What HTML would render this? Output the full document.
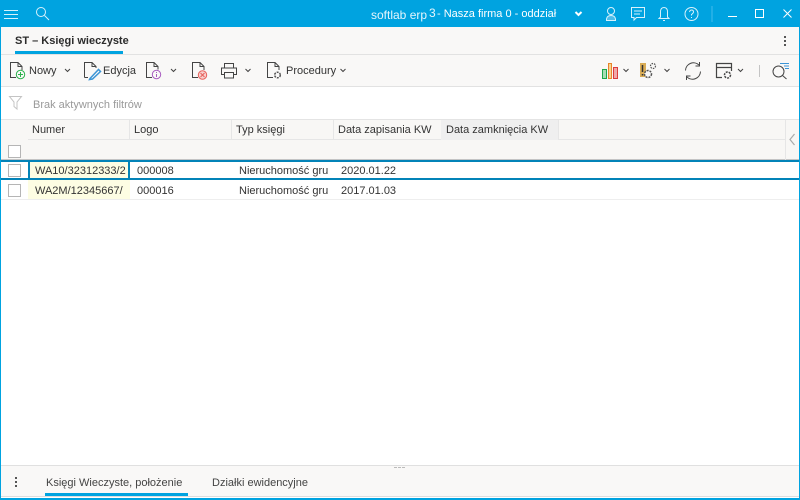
<!DOCTYPE html>
<html><head><meta charset="utf-8"><style>
html,body{margin:0;padding:0;background:#fff}
#p{position:relative;width:800px;height:500px;overflow:hidden;background:#fff;font-family:"Liberation Sans",sans-serif;font-size:11px;color:#333}
#p div,#p span.t{position:absolute;white-space:nowrap}
svg{position:absolute;overflow:visible;fill:none}
.t{line-height:14px}
</style></head><body><div id="p">
<div style="left:0;top:27px;width:800px;height:27px;background:#f9f8f7"></div>
<div style="left:0;top:54px;width:800px;height:1px;background:#e2e2e2"></div>
<div style="left:0;top:55px;width:800px;height:31px;background:#f9f8f7"></div>
<div style="left:0;top:86px;width:800px;height:1px;background:#e2e2e2"></div>
<div style="left:0;top:119px;width:800px;height:1px;background:#e4e4e4"></div>
<div style="left:0;top:120px;width:800px;height:39px;background:#f8f7f5"></div>
<div style="left:0;top:159px;width:800px;height:1px;background:#c4c4c4"></div>
<div style="left:28px;top:139px;width:758px;height:1px;background:#e6e6e6"></div>
<div style="left:129px;top:120px;width:1px;height:20px;background:#e6e6e6"></div>
<div style="left:231px;top:120px;width:1px;height:20px;background:#e6e6e6"></div>
<div style="left:333px;top:120px;width:1px;height:20px;background:#e6e6e6"></div>
<div style="left:441px;top:120px;width:118px;height:20px;background:#efefef"></div>
<div style="left:558px;top:120px;width:1px;height:20px;background:#e6e6e6"></div>
<div style="left:785px;top:120px;width:1px;height:40px;background:#e6e6e6"></div>
<div style="left:28px;top:162px;width:102px;height:16px;background:#fdfde3"></div>
<div style="left:28px;top:180px;width:102px;height:19px;background:#fdfde3"></div>
<div style="left:0;top:199px;width:800px;height:1px;background:#eeeeee"></div>
<div style="left:0;top:160px;width:800px;height:2px;background:#0383b8"></div>
<div style="left:0;top:178px;width:800px;height:2px;background:#0383b8"></div>
<div style="left:28px;top:160px;width:2px;height:20px;background:#0383b8"></div>
<div style="left:128px;top:160px;width:2px;height:20px;background:#0383b8"></div>
<div style="left:8px;top:145px;width:11px;height:11px;border:1px solid #b5b5b5;background:#fff"></div>
<div style="left:8px;top:164px;width:11px;height:11px;border:1px solid #b5b5b5;background:#fff"></div>
<div style="left:8px;top:184px;width:11px;height:11px;border:1px solid #b5b5b5;background:#fff"></div>
<div style="left:0;top:465px;width:800px;height:1px;background:#e0e0e0"></div>
<div style="left:0;top:466px;width:800px;height:31px;background:#f9f8f7"></div>
<div style="left:0;top:496px;width:800px;height:1px;background:#dddddd"></div>
<div style="left:45px;top:493px;width:143px;height:3px;background:#00a3e0"></div>
<div style="left:15px;top:51px;width:108px;height:3px;background:#00a3e0"></div>
<div style="left:394px;top:467px;width:3px;height:1px;background:#bbb"></div>
<div style="left:398px;top:467px;width:3px;height:1px;background:#bbb"></div>
<div style="left:402px;top:467px;width:3px;height:1px;background:#bbb"></div>
<div style="left:0;top:0;width:800px;height:27px;background:#00a3e0"></div>
<div style="left:0;top:0;width:1px;height:500px;background:#00a3e0"></div>
<div style="right:0;top:0;width:1px;height:500px;background:#00a3e0"></div>
<div style="left:0;bottom:0;width:800px;height:2px;background:#00a3e0"></div>

<span class="t" style="left:371px;top:8px;font-size:12px;color:#e4f5fc">softlab erp</span>
<span class="t" style="left:429px;top:6px;font-size:12px;color:#e4f5fc">3</span>
<span class="t" style="left:437px;top:7px;color:#fff">- Nasza firma 0 - oddział</span>
<span class="t" style="left:15px;top:34px;font-weight:bold;color:#2c2c2c">ST – Księgi wieczyste</span>
<span class="t" style="left:29px;top:64px">Nowy</span>
<span class="t" style="left:103px;top:64px">Edycja</span>
<span class="t" style="left:286px;top:64px">Procedury</span>
<span class="t" style="left:33px;top:98px;color:#999">Brak aktywnych filtrów</span>
<span class="t" style="left:32px;top:123px">Numer</span>
<span class="t" style="left:134px;top:123px">Logo</span>
<span class="t" style="left:236px;top:123px">Typ księgi</span>
<span class="t" style="left:338px;top:123px">Data zapisania KW</span>
<span class="t" style="left:446px;top:123px">Data zamknięcia KW</span>
<div class="t" style="left:35px;top:164px;width:92px;overflow:hidden">WA10/32312333/2</div>
<div class="t" style="left:35px;top:184px;width:92px;overflow:hidden">WA2M/12345667/</div>
<span class="t" style="left:137px;top:164px">000008</span>
<span class="t" style="left:137px;top:184px">000016</span>
<div class="t" style="left:239px;top:164px;width:90px;overflow:hidden">Nieruchomość gruntowa</div>
<div class="t" style="left:239px;top:184px;width:90px;overflow:hidden">Nieruchomość gruntowa</div>
<span class="t" style="left:341px;top:164px">2020.01.22</span>
<span class="t" style="left:341px;top:184px">2017.01.03</span>
<span class="t" style="left:46px;top:476px;color:#444">Księgi Wieczyste, położenie</span>
<span class="t" style="left:212px;top:476px;color:#444">Działki ewidencyjne</span>

<svg width="800" height="500" style="left:0;top:0">
<g stroke="#d8f1fb" stroke-width="1">
<path d="M4 10.500H18M4 14.500H18M4 18.500H18"/>
<circle cx="41" cy="12" r="4.500"/><path d="M44.500 15.500L49 20"/>
</g>
<path d="M575.500 12L578.500 15L581.500 12" stroke="#fff" stroke-width="2"/>
<g stroke="#d8f1fb" stroke-width="1">
<circle cx="611" cy="11" r="3.500"/><path d="M606.500 20.500V19Q607 15.500 611 15.500Q615 15.500 615.500 19V20.500Z" fill="#4dbdea"/>
<path d="M631.500 7.500H644.500V17.500H636.500L634 20V17.500H631.500Z"/><path d="M634 11H642M634 14H640"/>
<path d="M660.500 17V12Q660.500 7.500 664 7.500Q667.500 7.500 667.500 12V17L669 18.500H659Z"/><path d="M663 20.500H665"/>
<circle cx="691.500" cy="14" r="6.500"/>
<path d="M689.500 12Q690 10 691.500 10Q693.500 10 693.500 12Q693.500 13 691.500 14.500V15.500M691.500 17V18"/>
<path d="M712 6V22" stroke="#2db3e8" stroke-width="1.500"/>
</g>
<g stroke="#fff" stroke-width="1">
<path d="M728 16.500H737"/>
<rect x="755.500" y="9.500" width="8" height="8"/>
<path d="M783.500 9.500L791.500 17.500M791.500 9.500L783.500 17.500"/>
</g>
<g fill="#555"><rect x="784" y="36" width="2" height="2"/><rect x="784" y="40" width="2" height="2"/><rect x="784" y="44" width="2" height="2"/>
<rect x="15" y="477" width="2" height="2"/><rect x="15" y="481" width="2" height="2"/><rect x="15" y="485" width="2" height="2"/></g>

<g stroke="#444" stroke-width="1">
<path d="M16 77.500H10.500V62.500H18L22 66.500V70M18 62.500V66.500H22"/>
<path d="M84.500 77.500V62.500H92L96 66.500V68M92 62.500V66.500H96M84.500 77.500H88"/>
<path d="M152 77.500H146.500V62.500H154L158 66.500V69.500M154 62.500V66.500H158"/>
<path d="M198 77.500H192.500V62.500H200L204 66.500V70M200 62.500V66.500H204"/>
<path d="M224.500 67.500V63.500H233.500V67.500M224.500 74.500H221.500V68H236.500V74.500H233.500M224.500 72.500H233.500V78H224.500Z"/>
<path d="M273 77.500H267.500V62.500H275L279 66.500V70M275 62.500V66.500H279"/>
<path d="M685.500 70.500A8 8 0 0 1 699 65M699.500 62V66H695.500M700.500 71.500A8 8 0 0 1 687 77M686.500 80V76H690.500"/>
<path d="M722 77.500H716.500V63.500H731.500V71M716.500 67.500H731.500" stroke-width="1.200"/>
<circle cx="778.500" cy="71.500" r="5.500"/><path d="M782.500 75.500L786.500 79"/>
</g>
<path d="M759.500 65V77" stroke="#c4c4c4"/>
<g stroke="#444" stroke-width="1"><path d="M65 69L67.500 71.500L70 69M171 69L173.500 71.500L176 69M245.500 69L248 71.500L250.500 69M340.500 69L343 71.500L345.500 69M623.500 69L626 71.500L628.500 69M664.500 69L667 71.500L669.500 69M738 69L740.500 71.500L743 69"/></g>
<circle cx="20.500" cy="74.500" r="4.200" stroke="#2bb24c" fill="#f9f8f7"/><path d="M18 74.500H23M20.500 72V77" stroke="#2bb24c"/>
<path d="M90 78.500L98.500 69.500L100.500 71.500L92.500 79L89.500 79.500Z" stroke="#3c95d6" stroke-width="1.500" fill="#f9f8f7"/>
<circle cx="156.500" cy="74.500" r="4.200" stroke="#a85cc0" fill="#f9f8f7"/><path d="M156.500 74V77M156.500 72V73" stroke="#a85cc0"/>
<circle cx="202.500" cy="75" r="4.200" stroke="#e8605a" fill="#f6d0ce"/><path d="M200.500 73L204.500 77M204.500 73L200.500 77" stroke="#e8605a"/>
<circle cx="277.500" cy="75" r="2.800" stroke="#555" stroke-width="1.500" stroke-dasharray="2 1" fill="#f9f8f7"/>
<rect x="602.500" y="69.500" width="4" height="9" stroke="#1fa64a" fill="#a8dcb4"/>
<rect x="608.500" y="63.500" width="3" height="15" stroke="#e8842c" fill="#f8d48c"/>
<rect x="613.500" y="67.500" width="4" height="11" stroke="#dc3c3c" fill="#f0a8a8"/>
<rect x="640" y="63" width="6" height="14" fill="#d9ac56"/><path d="M642.500 65V72M642.500 74V75.500" stroke="#333" stroke-width="1.500"/>
<circle cx="648" cy="74" r="3.500" stroke="#555" stroke-dasharray="2 1" stroke-width="1.500" fill="#f9f8f7"/><circle cx="653" cy="66" r="2.500" stroke="#555" stroke-dasharray="1.500 1" stroke-width="1.200"/>
<circle cx="727.500" cy="75" r="3" stroke="#444" stroke-width="1.500" stroke-dasharray="2 1" fill="#f9f8f7"/>
<path d="M780 63.500H789M784 66H789M785 68.500H789" stroke="#3c95d6"/>
<path d="M9.500 96.500H21.500L17 102V109L14 106.500V102Z" stroke="#c4c4c4"/>
<path d="M794.500 134L790 139.500L794.500 145" stroke="#aaa" stroke-width="1.200"/>
</svg>
</div></body></html>
